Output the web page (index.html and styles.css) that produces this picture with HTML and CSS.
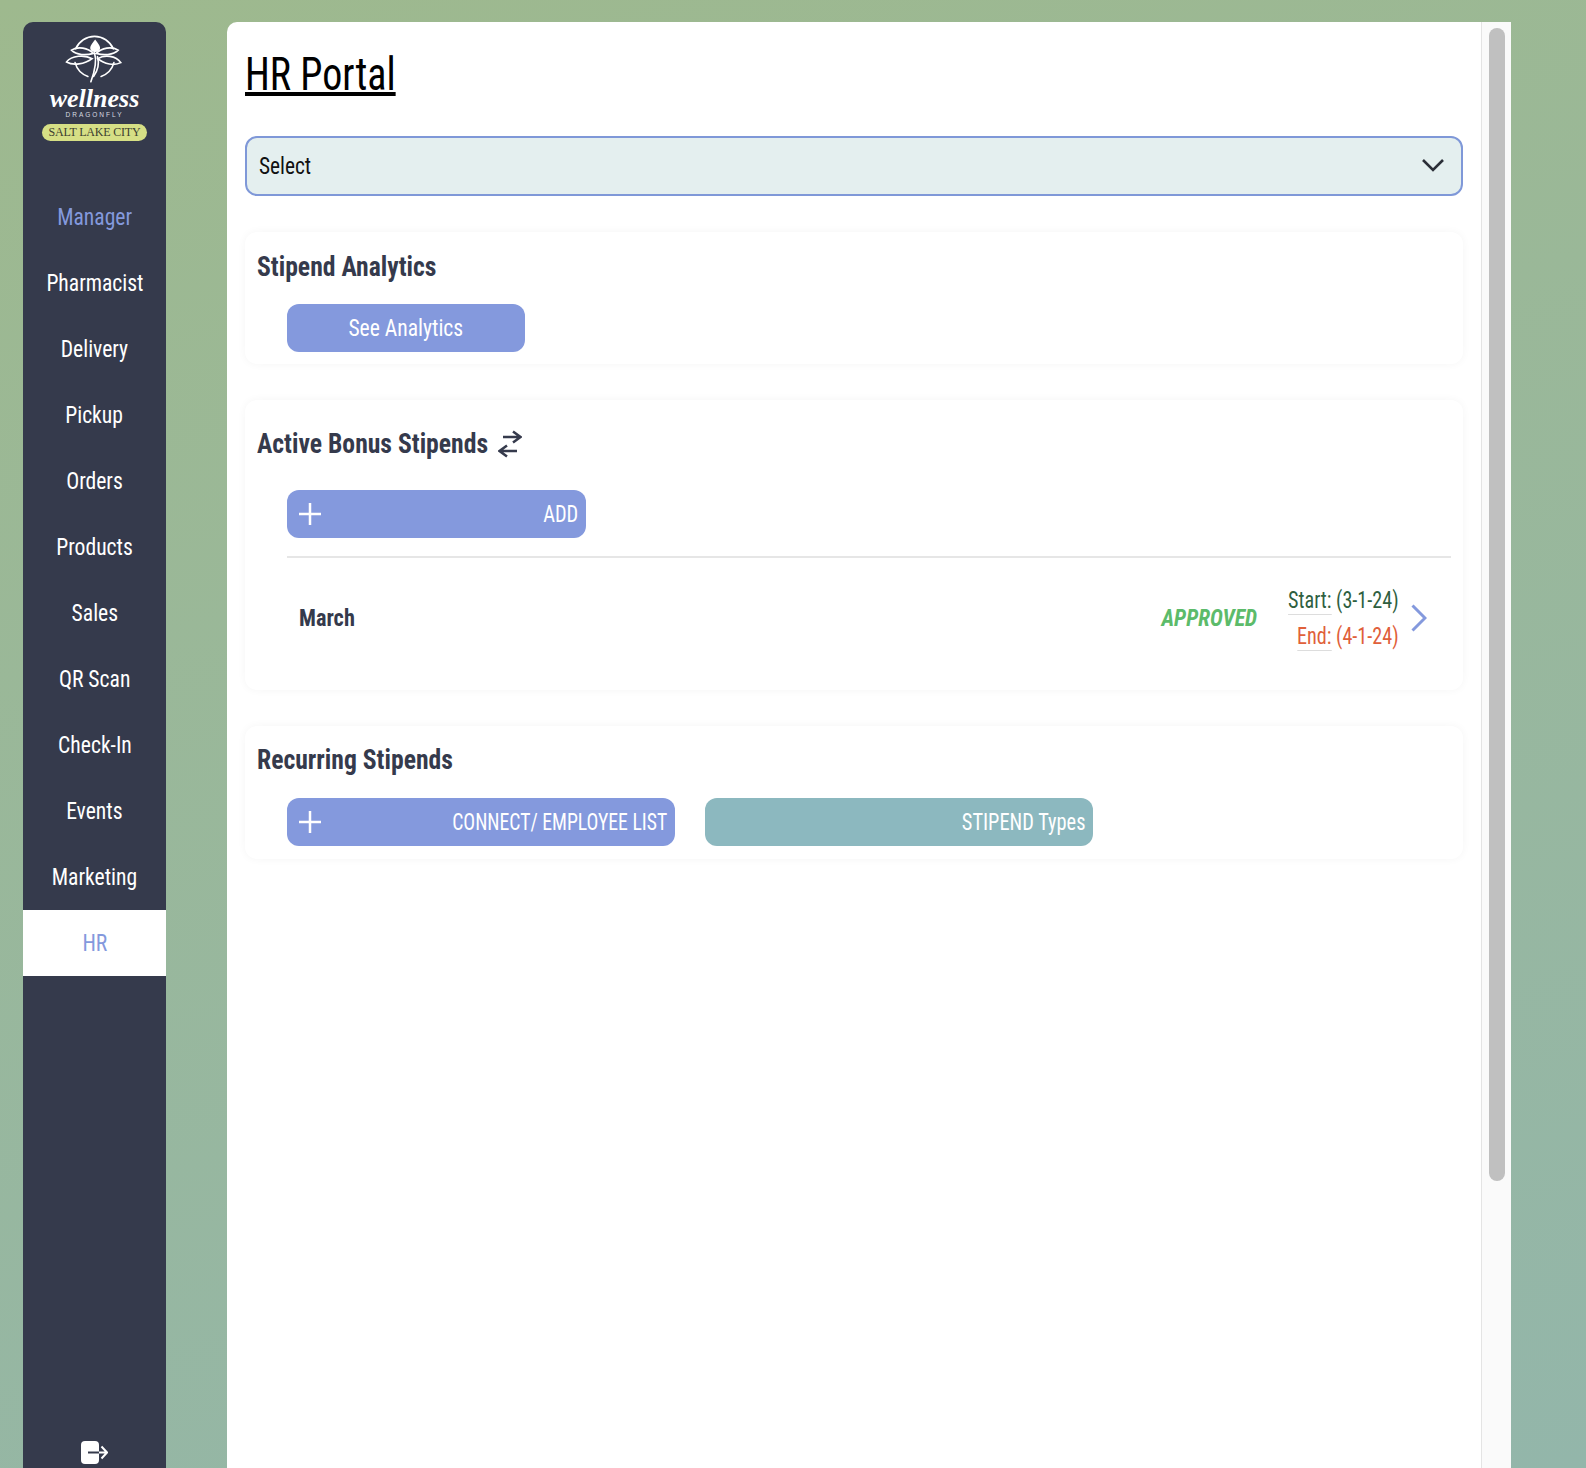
FILE: index.html
```html
<!DOCTYPE html>
<html lang="en">
<head>
  <meta charset="UTF-8">
  <meta name="viewport" content="width=device-width, initial-scale=1.0">
  <title>HR Portal</title>
  <link rel="stylesheet" href="styles.css">
</head>
<body>
  <aside class="sidebar">
    <div class="logo">
      <svg class="logo-mark" viewBox="130 40 190 155" fill="none" stroke="#fff" stroke-width="5" stroke-linecap="round">
        <path d="M168 88A62 62 0 0 1 282 88"/>
        <path d="M166 130A62 62 0 0 0 205 172"/>
        <path d="M284 130A62 62 0 0 1 245 172"/>
        <path d="M155 92C175 80 205 85 222 102C200 108 170 108 155 92Z"/>
        <path d="M297 92C277 80 247 85 230 102C252 108 282 108 297 92Z"/>
        <path d="M140 128C155 108 195 105 218 118C195 135 160 140 140 128Z"/>
        <path d="M305 130C290 108 255 105 235 118C255 135 285 140 305 130Z"/>
        <path d="M227 60C220 70 212 78 212 85C212 94 219 98 227 98C235 98 242 94 242 85C242 78 234 70 227 60Z" fill="#fff" stroke="none"/>
        <path d="M225 100C233 125 228 150 214 188"/>
        <path d="M234 112C240 132 234 155 222 172"/>
      </svg>
      <div class="logo-name">wellness</div>
      <div class="logo-sub">DRAGONFLY</div>
      <div class="logo-city">SALT LAKE CITY</div>
    </div>
    <nav class="nav">
      <a class="nav-item nav-item-accent"><span>Manager</span></a>
      <a class="nav-item"><span>Pharmacist</span></a>
      <a class="nav-item"><span>Delivery</span></a>
      <a class="nav-item"><span>Pickup</span></a>
      <a class="nav-item"><span>Orders</span></a>
      <a class="nav-item"><span>Products</span></a>
      <a class="nav-item"><span>Sales</span></a>
      <a class="nav-item"><span>QR Scan</span></a>
      <a class="nav-item"><span>Check-In</span></a>
      <a class="nav-item"><span>Events</span></a>
      <a class="nav-item"><span>Marketing</span></a>
      <a class="nav-item nav-item-active"><span>HR</span></a>
    </nav>
    <button class="logout" type="button" title="Sign out">
      <svg viewBox="0 0 27 24" width="27" height="24">
        <rect x="0" y="1" width="18" height="23" rx="4" fill="#fff"/>
        <path d="M7 12.500H18" stroke="#353a4c" stroke-width="2" fill="none"/>
        <path d="M18 12.500H25M20.500 6.500L26 12.500L20.500 18.500" stroke="#fff" stroke-width="2" fill="none"/>
      </svg>
    </button>
  </aside>

  <div class="panel">
    <main class="content">
      <h1 class="page-title">HR Portal</h1>

      <div class="select">
        <span class="select-text">Select</span>
        <svg class="select-arrow" viewBox="0 0 24 14" width="24" height="14" fill="none" stroke="#2b2f38" stroke-width="2.600">
          <path d="M2 2L12 12L22 2"/>
        </svg>
      </div>

      <section class="card card-analytics">
        <h2 class="card-title"><span class="card-title-text">Stipend Analytics</span></h2>
        <div class="card-body">
          <button class="btn btn-analytics" type="button"><span class="label-center">See Analytics</span></button>
        </div>
      </section>

      <section class="card card-bonus">
        <h2 class="card-title"><span class="card-title-text">Active Bonus Stipends</span>
          <svg class="swap" viewBox="0 0 24 28" width="24" height="28" fill="none" stroke="#353a4c" stroke-width="2.500">
            <path d="M5 7H22M15 1.500L22.500 7L15 12.500"/>
            <path d="M19 21H2M9 15.500L1.500 21L9 26.500"/>
          </svg>
        </h2>
        <div class="card-body">
          <button class="btn btn-add" type="button">
            <svg class="plus" viewBox="0 0 22 22" width="22" height="22"><path d="M11 0V22M0 11H22" stroke="#fff" stroke-width="2.500"/></svg>
            <span class="label-right label-add">ADD</span>
          </button>
          <div class="stipend-row">
            <span class="stipend-name">March</span>
            <span class="stipend-status">APPROVED</span>
            <div class="stipend-dates">
              <div class="date-start"><span class="date-label">Start:</span> (3-1-24)</div>
              <div class="date-end"><span class="date-label">End:</span> (4-1-24)</div>
            </div>
            <svg class="chevron" viewBox="0 0 16 28" width="16" height="28" fill="none" stroke="#8499dd" stroke-width="3">
              <path d="M1.500 1.500L14 14L1.500 26.500"/>
            </svg>
          </div>
        </div>
      </section>

      <section class="card card-recurring">
        <h2 class="card-title"><span class="card-title-text">Recurring Stipends</span></h2>
        <div class="card-body card-actions">
          <button class="btn btn-wide" type="button">
            <svg class="plus" viewBox="0 0 22 22" width="22" height="22"><path d="M11 0V22M0 11H22" stroke="#fff" stroke-width="2.500"/></svg>
            <span class="label-right label-connect">CONNECT/ EMPLOYEE LIST</span>
          </button>
          <button class="btn btn-wide btn-teal" type="button">
            <span></span>
            <span class="label-right label-types">STIPEND Types</span>
          </button>
        </div>
      </section>
    </main>
    <div class="rail"><div class="rail-thumb"></div></div>
  </div>
</body>
</html>
```

FILE: styles.css
```css
:root {
  --font-family: 'Liberation Sans Narrow', 'Roboto Condensed', 'Open Sans', sans-serif;
  --navy: #353a4c;
  --periwinkle: #8499dd;
  --teal: #8cb8bf;
  --radius: 12px;
}
* {
  box-sizing: border-box;
  margin: 0;
  padding: 0;
}
html, body {
  height: 100%;
  overflow: hidden;
}
body {
  display: flex;
  padding: 22px 0 0 23px;
  background: linear-gradient(165deg, #9eb98e 0%, #93b6aa 100%);
  font-family: var(--font-family);
  font-stretch: condensed;
}
.sidebar {
  display: flex;
  flex-direction: column;
  flex: none;
  width: 143px;
  height: calc(100vh - 22px);
  background: var(--navy);
  border-radius: 10px 10px 0 0;
}
.logo {
  display: flex;
  flex-direction: column;
  align-items: center;
  height: 162px;
  padding-top: 11px;
}
.logo-mark {
  flex: none;
  width: 63px;
  height: 51px;
}
.logo-name {
  margin-top: 2px;
  color: #fff;
  font-family: 'Liberation Serif', serif;
  font-size: 26px;
  font-style: italic;
  font-weight: 700;
  line-height: 26px;
}
.logo-sub {
  margin-top: -1px;
  color: #d8dae0;
  font-family: 'Liberation Sans', sans-serif;
  font-size: 6.500px;
  letter-spacing: 2px;
  line-height: 8px;
}
.logo-city {
  width: 105px;
  height: 17px;
  margin-top: 5px;
  background: #d6df85;
  border-radius: 9px;
  color: #3c4030;
  font-family: 'Liberation Serif', serif;
  font-size: 12px;
  letter-spacing: -0.2px;
  line-height: 17px;
  text-align: center;
}
.nav-item {
  display: block;
  height: 66px;
  color: #fff;
  font-size: 24px;
  line-height: 66px;
  text-align: center;
}
.nav-item span {
  display: inline-block;
  transform: scaleX(0.9);
}
.nav-item-accent {
  color: var(--periwinkle);
}
.nav-item-active {
  background: #fff;
  color: var(--periwinkle);
}
.logout {
  display: block;
  align-self: center;
  margin-top: auto;
  margin-bottom: 4px;
  background: none;
  border: none;
}
.logout svg {
  display: block;
}
.panel {
  display: flex;
  flex: none;
  width: 1284px;
  height: calc(100vh - 22px);
  margin-left: 61px;
  background: #fff;
  border-radius: 10px 0 0 0;
}
.content {
  flex: 1;
  padding: 22px 18px 0 18px;
}
.page-title {
  margin-bottom: 32px;
  color: #000;
  font-size: 46px;
  font-weight: 400;
  line-height: 60px;
  text-decoration: underline;
  text-decoration-thickness: 4px;
  transform: scaleX(0.87);
  transform-origin: left center;
}
.select {
  display: flex;
  justify-content: space-between;
  align-items: center;
  height: 60px;
  margin-bottom: 36px;
  padding: 0 16px 0 12px;
  background: #e4efef;
  border: 2px solid #7f98d8;
  border-radius: var(--radius);
  color: #111;
  font-size: 24px;
}
.select-text {
  transform: scaleX(0.89);
  transform-origin: left center;
}
.select-arrow {
  margin-bottom: 2px;
}
.card {
  margin-bottom: 36px;
  padding: 0 12px;
  background: #fff;
  border-radius: var(--radius);
  box-shadow: 0 0 8px rgba(0, 0, 0, 0.045);
}
.card-analytics {
  height: 132px;
  padding-top: 18px;
}
.card-bonus {
  height: 290px;
  padding-top: 27px;
}
.card-recurring {
  height: 133px;
  padding-top: 17px;
}
.card-title {
  display: flex;
  align-items: center;
  color: var(--navy);
  font-size: 27px;
  font-weight: 700;
  line-height: 34px;
}
.card-title-text {
  transform: scaleX(0.95);
  transform-origin: left center;
}
.swap {
  margin-left: -2px;
}
.card-analytics .card-title {
  margin-bottom: 20px;
}
.card-recurring .card-title {
  margin-bottom: 21px;
}
.card-bonus .card-title {
  margin-bottom: 29px;
}
.card-body {
  padding-left: 30px;
}
.card-actions {
  display: flex;
  gap: 30px;
}
.btn {
  display: flex;
  justify-content: space-between;
  align-items: center;
  height: 48px;
  padding: 0 8px 0 12px;
  background: var(--periwinkle);
  border: none;
  border-radius: var(--radius);
  color: #fff;
  font-family: var(--font-family);
  font-stretch: condensed;
  font-size: 24px;
}
.btn-analytics {
  justify-content: center;
  width: 238px;
  padding: 0;
}
.btn-add {
  width: 299px;
}
.btn-wide {
  width: 388px;
}
.btn-teal {
  background: var(--teal);
}
.label-center {
  transform: scaleX(0.9);
}
.label-right {
  transform-origin: right center;
}
.label-add {
  transform: scaleX(0.85);
}
.label-connect {
  transform: scaleX(0.82);
}
.label-types {
  transform: scaleX(0.85);
}
.stipend-row {
  display: flex;
  align-items: center;
  margin-top: 18px;
  padding: 24px 24px 0 12px;
  border-top: 2px solid #e6e6e6;
}
.stipend-name {
  margin-right: auto;
  color: var(--navy);
  font-size: 24px;
  font-weight: 700;
  transform: scaleX(0.93);
  transform-origin: left center;
}
.stipend-status {
  margin-right: 10px;
  color: #5cbb6a;
  font-size: 24px;
  font-style: italic;
  font-weight: 700;
  transform: scaleX(0.91);
  transform-origin: right center;
}
.stipend-dates {
  font-size: 24px;
  line-height: 36px;
  text-align: right;
  transform: scaleX(0.84);
  transform-origin: right center;
}
.date-label {
  border-bottom: 1px solid #ddd;
}
.date-start {
  color: #2f5f3f;
}
.date-end {
  color: #e0603a;
}
.chevron {
  margin-left: 12px;
}
.rail {
  flex: none;
  width: 30px;
  padding: 6px 6px 0 7px;
  background: #fafafa;
  border-left: 1px solid #e4e4e4;
}
.rail-thumb {
  width: 16px;
  height: 1153px;
  background: #c0c0c0;
  border-radius: 8px;
}
```
